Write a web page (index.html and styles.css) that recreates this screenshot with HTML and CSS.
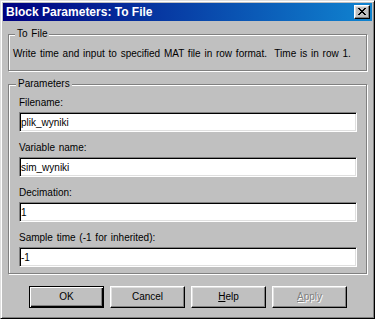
FILE: index.html
```html
<!DOCTYPE html>
<html lang="en">
<head>
    <meta charset="UTF-8">
    <meta name="viewport" content="width=device-width, initial-scale=1.0">
    <title>Block Parameters: To File</title>
    <link rel="stylesheet" href="styles.css">
</head>
<body>
    <div class="window">
        <div class="titlebar">
            <span class="title">Block Parameters: To File</span>
            <button class="close" title="Close">
                <svg width="8" height="7" viewBox="0 0 8 7" shape-rendering="crispEdges">
                    <path d="M0 0h2v1H0z M6 0h2v1H6z M1 1h2v1H1z M5 1h2v1H5z M2 2h4v1H2z M3 3h2v1H3z M2 4h4v1H2z M1 5h2v1H1z M5 5h2v1H5z M0 6h2v1H0z M6 6h2v1H6z" fill="#000"/>
                </svg>
            </button>
        </div>

        <div class="content">
            <div class="group info">
                <div class="group-title">To File</div>
                <p class="desc">Write time and input to specified MAT file in row format.&nbsp; Time is in row 1.</p>
            </div>

            <div class="group params">
                <div class="group-title">Parameters</div>
                <div class="field">
                    <label for="filename">Filename:</label>
                    <input type="text" id="filename" value="plik_wyniki">
                </div>
                <div class="field">
                    <label for="varname">Variable name:</label>
                    <input type="text" id="varname" value="sim_wyniki">
                </div>
                <div class="field">
                    <label for="decimation">Decimation:</label>
                    <input type="text" id="decimation" value="1">
                </div>
                <div class="field">
                    <label for="sampletime">Sample time (-1 for inherited):</label>
                    <input type="text" id="sampletime" value="-1">
                </div>
            </div>

            <div class="buttons">
                <button class="btn default">OK</button>
                <button class="btn">Cancel</button>
                <button class="btn"><u>H</u>elp</button>
                <button class="btn" disabled><u>A</u>pply</button>
            </div>
        </div>
    </div>
</body>
</html>
```

FILE: styles.css
```css
body {
    margin: 0;
    font-family: "Liberation Sans", Arial, sans-serif;
    font-size: 10px;
    line-height: 12px;
    word-spacing: 1px;
    color: #000;
    background-color: #c0c0c0;
}

.window {
    width: 375px;
    height: 319px;
    box-sizing: border-box;
    padding: 2px;
    background-color: #c0c0c0;
    border: 1px solid;
    border-color: #dfdfdf #000 #000 #dfdfdf;
    box-shadow: inset 1px 1px 0 #fff, inset -1px -1px 0 #808080;
}

.titlebar {
    display: flex;
    align-items: center;
    justify-content: space-between;
    height: 18px;
    padding: 0 2px 0 3px;
    background: linear-gradient(to right, #000080, #1084d0);
}

.title {
    color: #fff;
    font-size: 12px;
    font-weight: bold;
    line-height: 18px;
    word-spacing: 0;
}

.close {
    display: flex;
    align-items: center;
    justify-content: center;
    width: 16px;
    height: 14px;
    padding: 0;
    background-color: #c0c0c0;
    border: 1px solid;
    border-color: #fff #000 #000 #fff;
    box-shadow: inset -1px -1px 0 #808080, inset 1px 1px 0 #dfdfdf;
}

.close svg {
    display: block;
    margin: 0 1px 1px 0;
}

.content {
    padding: 13px 5px 0;
}

.group {
    border: 1px solid #808080;
    box-shadow: inset 1px 1px 0 #fff, 1px 1px 0 #fff;
}

.group-title {
    width: fit-content;
    margin-top: -7px;
    padding: 0 2px;
    background-color: #c0c0c0;
}

.info {
    padding: 0 4px 10px;
}

.info .group-title {
    margin-left: 2px;
}

.desc {
    margin: 8px 0 0;
}

.params {
    margin-top: 13px;
    padding: 0 9px 6px 10px;
}

.params .group-title {
    margin-left: -3px;
    margin-bottom: 7px;
}

.field + .field {
    margin-top: 10px;
}

.field label {
    display: block;
    margin-bottom: 3px;
}

.field input {
    display: block;
    width: 100%;
    height: 20px;
    box-sizing: border-box;
    margin: 0;
    padding: 0 1px;
    font: inherit;
    color: #000;
    background-color: #fff;
    border: 1px solid;
    border-color: #808080 #fff #fff #808080;
    box-shadow: inset 1px 1px 0 #000, inset -1px -1px 0 #dfdfdf;
    outline: none;
}

.buttons {
    display: flex;
    gap: 6px;
    margin: 12px 0 0 21px;
}

.btn {
    width: 75px;
    height: 22px;
    padding: 0;
    font: inherit;
    color: #000;
    background-color: #c0c0c0;
    border: 1px solid;
    border-color: #fff #000 #000 #fff;
    box-shadow: inset -1px -1px 0 #808080, inset 1px 1px 0 #dfdfdf;
}

.btn.default {
    border-color: #000;
    box-shadow: inset 1px 1px 0 #fff, inset -1px -1px 0 #000, inset -2px -2px 0 #808080;
}

.btn:disabled {
    color: #808080;
    text-shadow: 1px 1px 0 #fff;
}
```
